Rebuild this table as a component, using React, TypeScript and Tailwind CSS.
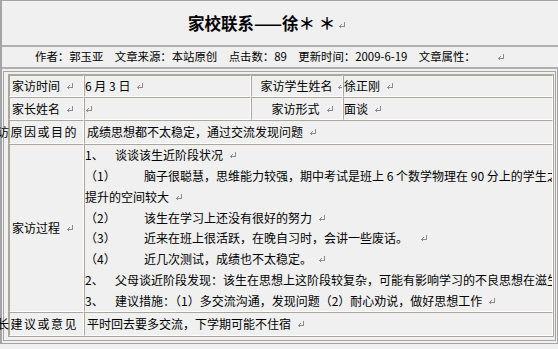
import React from "react";

// paragraph mark, the little grey "return" sign Word leaves behind
const Ret = ({ className = "" }: { className?: string }) => (
  <svg
    width="8"
    height="8"
    viewBox="0 0 8 8"
    fill="none"
    stroke="#8c8c8c"
    strokeWidth="1"
    shapeRendering="crispEdges"
    className={`inline-block shrink-0 ${className}`}
  >
    <path d="M6.5 1v4.5H1.5" />
    <path d="M3.5 3.5L1.5 5.5L3.5 7.5" />
  </svg>
);

const cell =
  "border-t border-l border-r border-b border-t-[#aca899] border-l-[#aca899] border-r-white border-b-white";

const App = () => {
  const lines: { no: string; w: string; text: string; ret?: boolean }[] = [
    { no: "1、", w: "w-[30px]", text: "谈谈该生近阶段状况", ret: true },
    {
      no: "（1）",
      w: "w-[59px]",
      text: "脑子很聪慧，思维能力较强，期中考试是班上 6 个数学物理在 90 分上的学生之一，",
    },
    { no: "", w: "w-0", text: "提升的空间较大", ret: true },
    { no: "（2）", w: "w-[59px]", text: "该生在学习上还没有很好的努力", ret: true },
    { no: "（3）", w: "w-[59px]", text: "近来在班上很活跃，在晚自习时，会讲一些废话。　", ret: true },
    { no: "（4）", w: "w-[59px]", text: "近几次测试，成绩也不太稳定。", ret: true },
    {
      no: "2、",
      w: "w-[30px]",
      text: "父母谈近阶段发现：该生在思想上这阶段较复杂，可能有影响学习的不良思想在滋生",
    },
    { no: "3、", w: "w-[30px]", text: "建议措施：（1）多交流沟通，发现问题（2）耐心劝说，做好思想工作", ret: true },
  ];

  return (
    <div className="w-[558px] h-[349px] bg-[#f0f0f0] text-black font-['Noto_Sans_CJK_SC',sans-serif]">
      <div className="border-t border-l-2 border-[#a4a4a4]">
        {/* Title */}
        <div className="h-[46px] flex items-center pl-[186px] border-b-2 border-[#b0b0b0]">
          <span className="text-[16.5px] font-bold leading-none whitespace-nowrap">家校联系——徐＊ ＊</span>
          <Ret className="ml-[3px] mt-[3px]" />
        </div>

        {/* Meta */}
        <div className="h-[22px] flex items-center pl-[33px] border-b-2 border-[#b0b0b0]">
          <span className="w-[462px] text-[11.4px] leading-none whitespace-nowrap">
            作者：郭玉亚　文章来源：本站原创　点击数：89　更新时间：2009-6-19　文章属性：
          </span>
          <Ret />
        </div>

        {/* Body frame */}
        <div className="pt-[2px] pl-px pr-px pb-[2px] border-r border-b border-[#a4a4a4]">
          <div className="border border-[#a4a4a4] pt-[2px] pl-[4px] pr-px pb-[3px]">
            <div className="border border-[#aca899] text-[12px] leading-none">
              <div className="grid grid-cols-[75px_167px_92px_210px] grid-rows-[22px_23px_24px_168px_24px]">
                {/* row 1 */}
                <div className={`${cell} flex items-center pl-[2px] whitespace-nowrap`}>
                  家访时间
                  <Ret className="ml-[6px]" />
                </div>
                <div className={`${cell} flex items-center whitespace-nowrap`}>
                  6 月 3 日
                  <Ret className="ml-[6px]" />
                </div>
                <div className={`${cell} flex items-center justify-center pl-[11px] overflow-hidden whitespace-nowrap`}>
                  <span className="shrink-0">家访学生姓名</span>
                  <Ret className="ml-[4px]" />
                </div>
                <div className={`${cell} flex items-center whitespace-nowrap`}>
                  徐正刚
                  <Ret className="ml-[6px]" />
                </div>

                {/* row 2 */}
                <div className={`${cell} flex items-center pl-[2px] whitespace-nowrap`}>
                  家长姓名
                  <Ret className="ml-[6px]" />
                </div>
                <div className={`${cell} flex items-center`}>
                  <Ret />
                </div>
                <div className={`${cell} flex items-center justify-center pl-[11px] overflow-hidden whitespace-nowrap`}>
                  <span className="shrink-0">家访形式</span>
                  <Ret className="ml-[6px]" />
                </div>
                <div className={`${cell} flex items-center whitespace-nowrap`}>
                  面谈
                  <Ret className="ml-[6px]" />
                </div>

                {/* row 3 */}
                <div className={`${cell} flex items-center justify-end pr-[5px]`}>
                  <span className="shrink-0 whitespace-nowrap tracking-[1.5px]">家访原因或目的</span>
                </div>
                <div className={`${cell} col-span-3 flex items-center pl-[2px] overflow-hidden whitespace-nowrap`}>
                  成绩思想都不太稳定，通过交流发现问题
                  <Ret className="ml-[6px]" />
                </div>

                {/* row 4 */}
                <div className={`${cell} flex items-center pl-[2px] whitespace-nowrap`}>
                  家访过程
                  <Ret className="ml-[6px]" />
                </div>
                <div className={`${cell} col-span-3 overflow-hidden`}>
                  {lines.map((l, i) => (
                    <div key={i} className="h-[20.75px] flex items-center whitespace-nowrap">
                      <span className={`${l.w} shrink-0`}>{l.no}</span>
                      <span className="shrink-0">{l.text}</span>
                      {l.ret && <Ret className="ml-[6px]" />}
                    </div>
                  ))}
                </div>

                {/* row 5 */}
                <div className={`${cell} flex items-center justify-end pr-[5px]`}>
                  <span className="shrink-0 whitespace-nowrap tracking-[1.5px]">家长建议或意见</span>
                </div>
                <div className={`${cell} col-span-3 flex items-center pl-[2px] overflow-hidden whitespace-nowrap`}>
                  平时回去要多交流，下学期可能不住宿
                  <Ret className="ml-[6px]" />
                </div>
              </div>
            </div>
          </div>
        </div>
      </div>
    </div>
  );
};

export default App;
